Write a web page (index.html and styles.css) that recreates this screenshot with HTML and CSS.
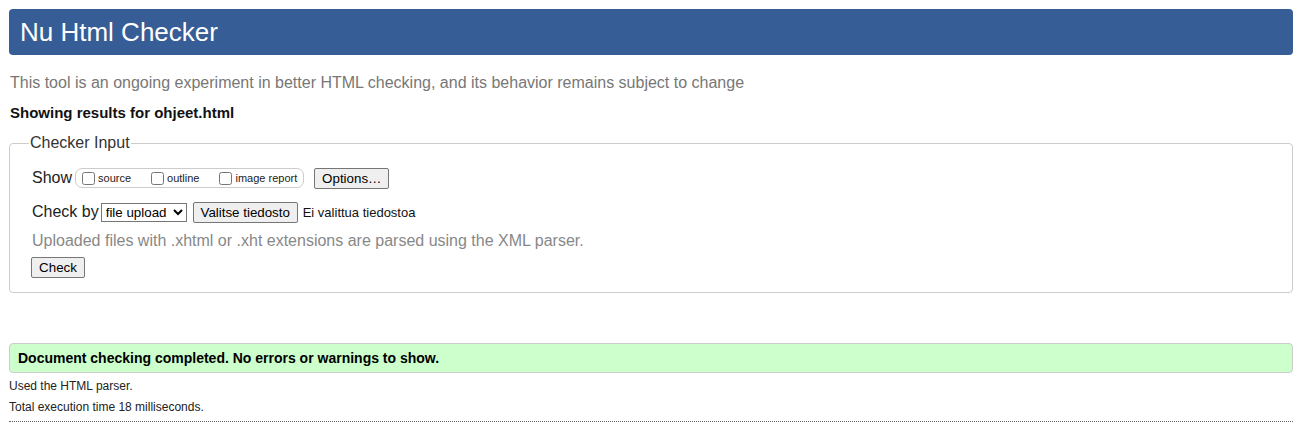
FILE: index.html
```html
<!DOCTYPE html>
<html lang="en">
<head>
<meta charset="utf-8">
<title>Nu Html Checker</title>
<link rel="stylesheet" href="styles.css">
</head>
<body>
<h1 class="title">Nu Html Checker</h1>
<p class="intro">This tool is an ongoing experiment in better HTML checking, and its behavior remains subject to change</p>
<p class="showing">Showing results for ohjeet.html</p>
<form class="form">
<fieldset class="fs">
<legend class="legend">Checker Input</legend>
<div class="row row-show">
<span class="lbl">Show</span>
<span class="group">
<label class="opt"><input type="checkbox" class="cb">source</label>
<label class="opt"><input type="checkbox" class="cb">outline</label>
<label class="opt"><input type="checkbox" class="cb">image report</label>
</span>
<button type="button" class="btn btn-opts">Options…</button>
</div>
<div class="row row-check">
<span class="lbl">Check by</span>
<select class="sel"><option>file upload</option></select>
<button type="button" class="btn btn-file">Valitse tiedosto</button>
<span class="nofile">Ei valittua tiedostoa</span>
</div>
<p class="note">Uploaded files with .xhtml or .xht extensions are parsed using the XML parser.</p>
<div class="row"><button type="button" class="btn btn-check">Check</button></div>
</fieldset>
</form>
<p class="success">Document checking completed. No errors or warnings to show.</p>
<p class="meta">Used the HTML parser.</p>
<p class="meta">Total execution time 18 milliseconds.</p>
<hr class="rule">
</body>
</html>
```

FILE: styles.css
```css
html, body {
  margin: 0;
  padding: 0;
  background: #fff;
}
body {
  padding: 9px 17px 0 9px;
  font-family: "Liberation Sans", Arial, sans-serif;
  color: #000;
}
.title {
  margin: 0;
  height: 46px;
  line-height: 46px;
  padding: 0 11px;
  font-size: 26px;
  font-weight: normal;
  color: #fff;
  background: #365d95;
  border-radius: 4px;
}
.intro {
  margin: 19px 0 0 1px;
  font-size: 16px;
  line-height: 18px;
  color: #777;
}
.showing {
  margin: 12px 0 0 1px;
  font-size: 15px;
  font-weight: bold;
  line-height: 18px;
  color: #111;
}
.form {
  margin: 12px 0 0 0;
}
.fs {
  margin: 0;
  padding: 15px 21px 14px 22px;
  border: 1px solid #ccc;
  border-radius: 4px;
}
.legend {
  padding: 0 1px;
  margin-left: -3px;
  font-size: 16px;
  line-height: 18px;
  color: #333;
}
.row {
  display: flex;
  align-items: center;
}
.row-show {
  height: 22px;
}
.row-check {
  margin-top: 12px;
  height: 22px;
}
.lbl {
  font-size: 16px;
  color: #222;
  margin-right: 3px;
}
.row-check .lbl {
  margin-right: 2px;
}
.group {
  display: inline-flex;
  align-items: center;
  height: 18px;
  padding: 0 6px 0 6px;
  border: 1px solid #ccc;
  border-radius: 7px;
  margin-right: 10px;
}
.opt {
  display: inline-flex;
  align-items: center;
  font-size: 11px;
  color: #222;
  margin-right: 20px;
}
.opt:last-child {
  margin-right: 0;
}
.cb {
  margin: 0 3px 0 0;
  width: 13px;
  height: 13px;
}
.btn {
  font-family: "Liberation Sans", Arial, sans-serif;
  font-size: 13.33px;
  color: #000;
  background: #efefef;
  border: 1px solid #767676;
  border-radius: 2px;
  padding: 1px 6px;
  height: 21px;
  line-height: 17px;
}
.btn-opts {
  width: 75px;
}
.sel {
  font-family: "Liberation Sans", Arial, sans-serif;
  font-size: 13.33px;
  height: 19px;
  width: 86px;
  padding: 0;
  border: 1px solid #767676;
  border-radius: 0;
  background: #fff;
  color: #000;
  margin-right: 6px;
}
.btn-file {
  width: 105px;
  margin-right: 5px;
}
.nofile {
  font-size: 13px;
  color: #111;
}
.note {
  margin: 8px 0 7px 0;
  font-size: 16px;
  line-height: 19px;
  color: #888;
}
.btn-check {
  width: 54px;
  margin-left: -1px;
}
.success {
  margin: 50px 0 0 0;
  height: 28px;
  line-height: 28px;
  padding: 0 8px;
  font-size: 14px;
  font-weight: bold;
  background: #ccffcc;
  border: 1px solid #ccc;
  border-radius: 4px;
  color: #000;
}
.meta {
  margin: 6px 0 0 0;
  font-size: 12px;
  line-height: 15px;
  color: #222;
}
.meta + .meta {
  margin-top: 6px;
}
.rule {
  margin: 6px 0 0 0;
  border: 0;
  border-top: 1px dotted #666;
  height: 0;
}
```
